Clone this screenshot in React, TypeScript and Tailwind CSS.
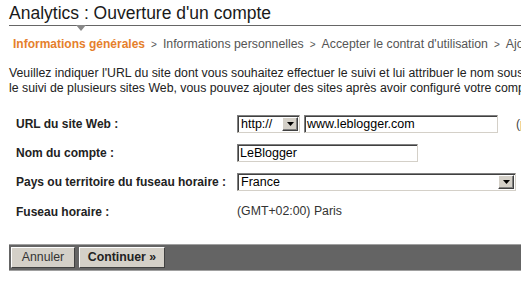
import React from "react";

const sunken =
  "border border-t-[#808080] border-l-[#808080] border-b-[#d4d0c8] border-r-[#d4d0c8] shadow-[inset_1px_1px_0_#404040] bg-white";

function DropButton() {
  return (
    <div className="w-[16px] h-[14px] bg-[#d4d0c8] border border-t-white border-l-white border-b-[#404040] border-r-[#404040] shadow-[inset_-1px_-1px_0_#808080] flex items-center justify-center">
      <svg width="7" height="4" viewBox="0 0 7 4">
        <path d="M0 0h7L3.5 4z" fill="#000" />
      </svg>
    </div>
  );
}

function Select({ value, className }: { value: string; className: string }) {
  return (
    <div className={`${sunken} ${className} h-[18px] flex items-center justify-between pl-[3px] pr-px`}>
      <span className="text-[12.5px] text-black">{value}</span>
      <DropButton />
    </div>
  );
}

function Field({ value, className }: { value: string; className: string }) {
  return (
    <div className={`${sunken} ${className} h-[18px] flex items-center pl-[2px]`}>
      <span className="text-[12.5px] text-black">{value}</span>
    </div>
  );
}

export default function App() {
  return (
    <div
      className="w-[521px] h-[281px] overflow-hidden bg-white text-[#333]"
      style={{ fontFamily: "'Liberation Sans', Arial, sans-serif" }}
    >
      {/* Title */}
      <div className="relative ml-[9px] pt-[3px] border-b border-[#666] h-[26px]">
        <h1 className="text-[17.5px] leading-[20px] text-[#1a1a1a] whitespace-nowrap">
          Analytics : Ouverture d'un compte
        </h1>
        <svg className="absolute left-[67px] top-[25px]" width="10" height="6" viewBox="0 0 10 6">
          <path d="M0 0h10L5 6z" fill="#888" />
        </svg>
      </div>

      {/* Steps */}
      <div className="flex items-center pl-[13px] mt-[10px] h-[16px] text-[12.3px] whitespace-nowrap text-[#555]">
        <span className="font-bold text-[12px] text-[#e5802c]">Informations générales</span>
        <span className="mx-[6px] text-[10px]">&gt;</span>
        <span>Informations personnelles</span>
        <span className="mx-[6px] text-[10px]">&gt;</span>
        <span>Accepter le contrat d'utilisation</span>
        <span className="mx-[6px] text-[10px]">&gt;</span>
        <span>Ajouter le code de suivi</span>
      </div>

      {/* Intro */}
      <div className="pl-[9px] mt-[14px] text-[12.3px] leading-[15px] text-[#222] whitespace-nowrap">
        <p>Veuillez indiquer l'URL du site dont vous souhaitez effectuer le suivi et lui attribuer le nom sous lequel</p>
        <p>le suivi de plusieurs sites Web, vous pouvez ajouter des sites après avoir configuré votre compte.</p>
      </div>

      {/* Form */}
      <div className="grid grid-cols-[221px_1fr] pl-[16px] mt-[19px] text-[12.3px] items-center gap-y-[11px]">
        <div className="font-bold text-[12px] text-[#222]">URL du site Web :</div>
        <div className="flex items-center gap-[4px] whitespace-nowrap">
          <Select value="http://" className="w-[63px]" />
          <Field value="www.leblogger.com" className="w-[194px]" />
          <span className="ml-[14px] text-[#444]">(par exemple)</span>
        </div>

        <div className="font-bold text-[12px] text-[#222]">Nom du compte :</div>
        <div>
          <Field value="LeBlogger" className="w-[181px]" />
        </div>

        <div className="font-bold text-[12px] text-[#222]">Pays ou territoire du fuseau horaire :</div>
        <div>
          <Select value="France" className="w-[279px]" />
        </div>

        <div className="font-bold text-[12px] text-[#222]">Fuseau horaire :</div>
        <div>(GMT+02:00) Paris</div>
      </div>

      {/* Actions */}
      <div className="ml-[9px] mt-[23px] bg-[#646464] border-t border-b border-[#a0a0a0] flex gap-[4px] px-[2px] py-[2px] text-[12.3px]">
        <button className="h-[21px] w-[64px] bg-[#d4d0c8] border border-t-white border-l-white border-b-[#404040] border-r-[#404040] text-[#333]">
          Annuler
        </button>
        <button className="h-[21px] w-[86px] bg-[#d4d0c8] border border-t-white border-l-white border-b-[#404040] border-r-[#404040] font-bold text-[#222]">
          Continuer »
        </button>
      </div>
    </div>
  );
}
